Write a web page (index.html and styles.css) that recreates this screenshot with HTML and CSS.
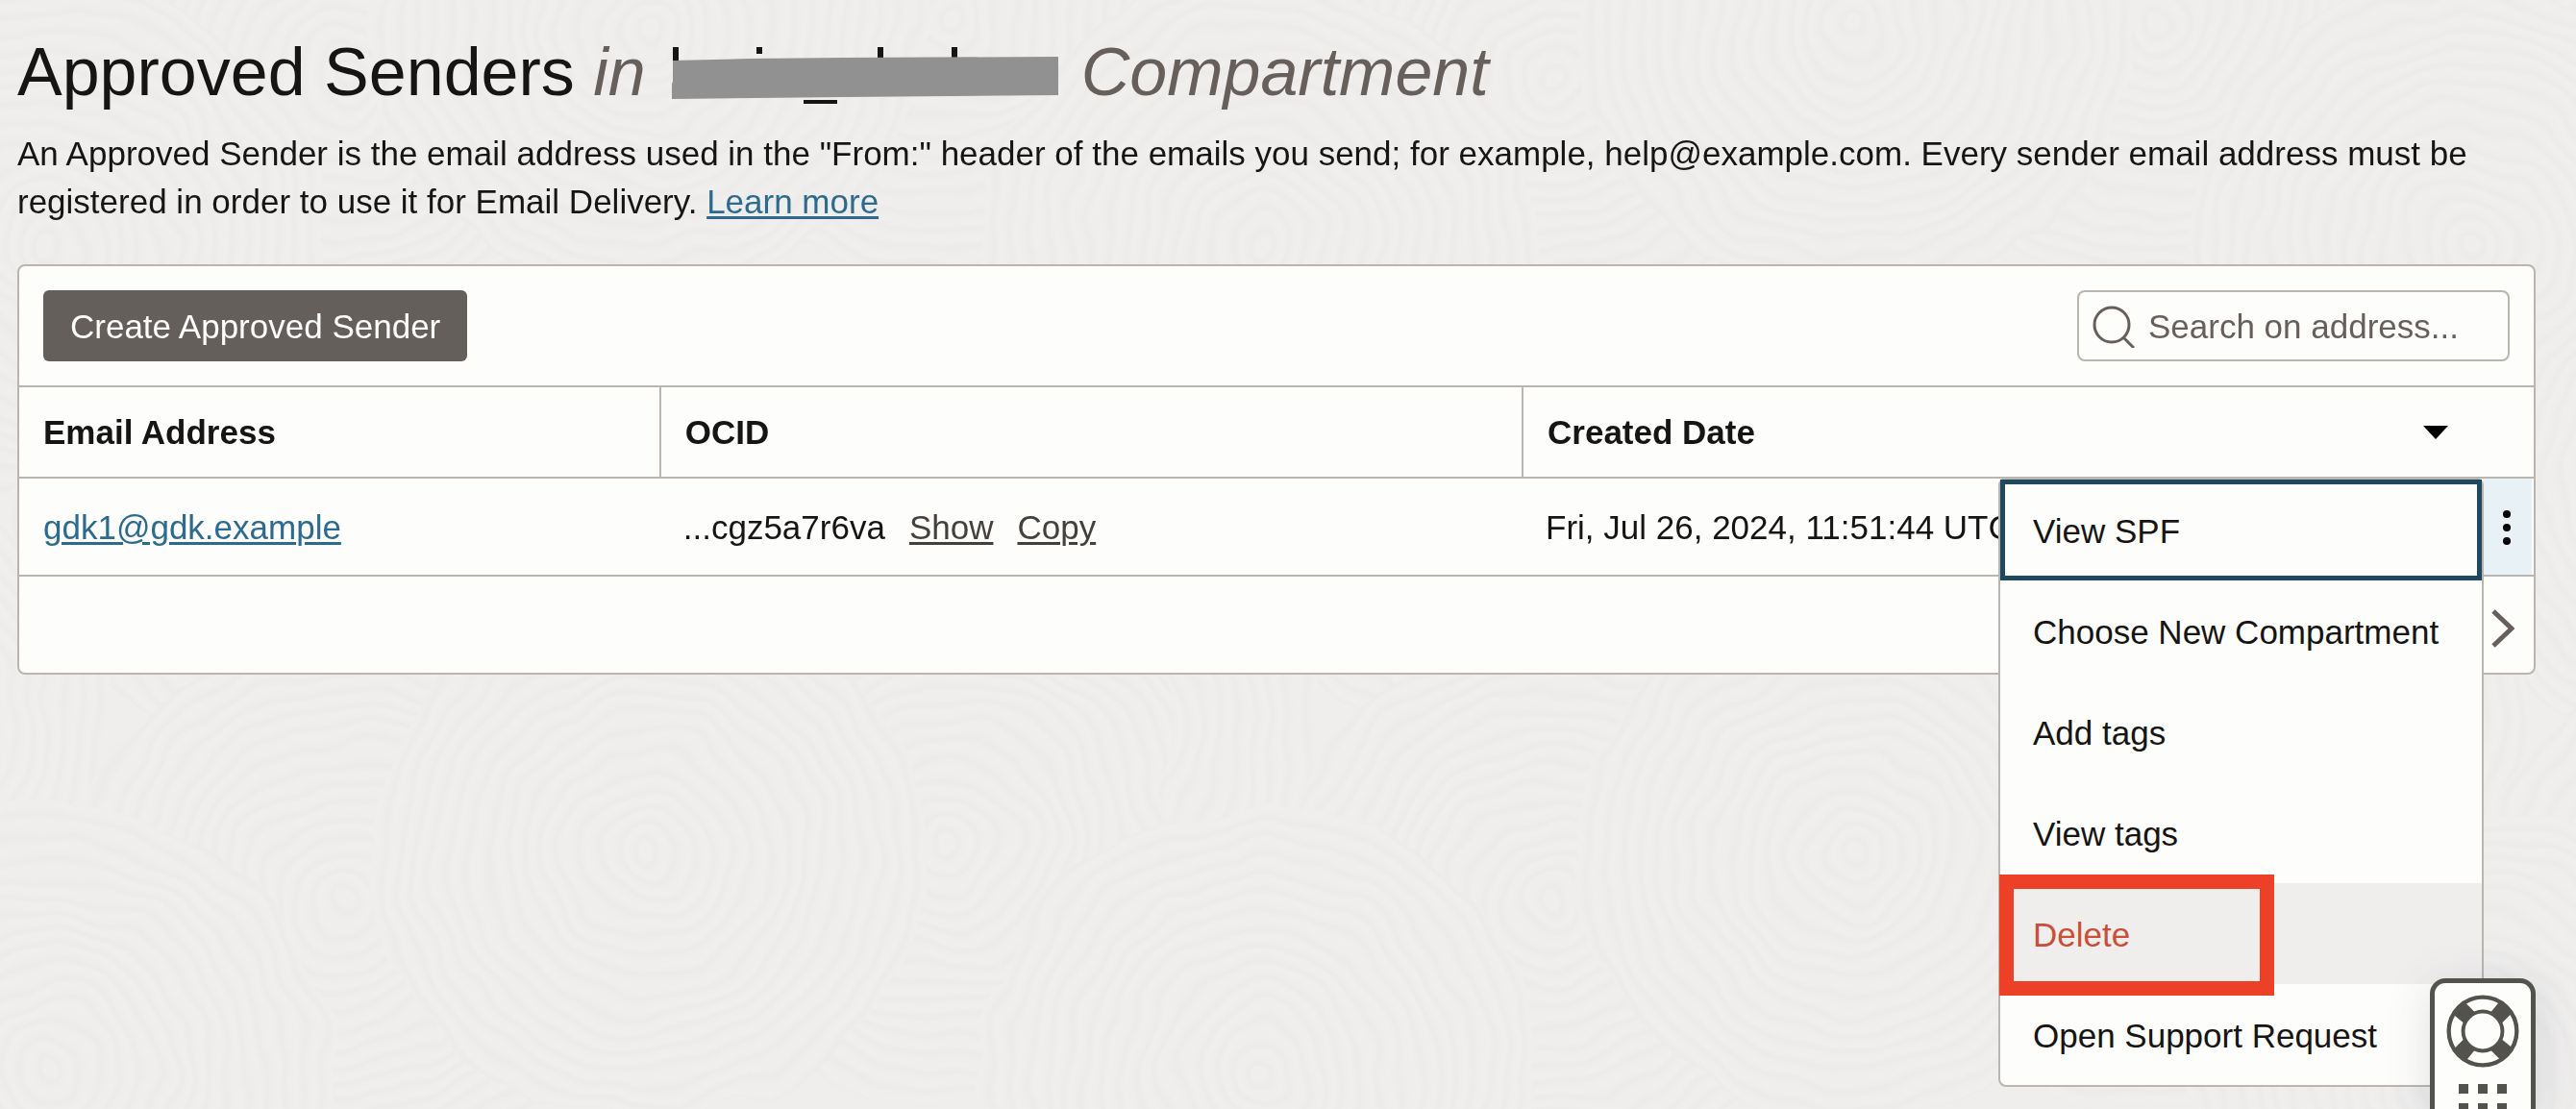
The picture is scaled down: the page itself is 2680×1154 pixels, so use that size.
FILE: index.html
```html
<!DOCTYPE html>
<html lang="en">
<head>
<meta charset="utf-8">
<title>Approved Senders</title>
<link rel="stylesheet" href="styles.css">
</head>
<body>
<svg class="texture" aria-hidden="true">
  <defs>
    <radialGradient id="ring" gradientUnits="userSpaceOnUse" cx="0" cy="0" r="19" spreadMethod="repeat">
      <stop offset="0" stop-color="#efeeed"/>
      <stop offset="0.35" stop-color="#f0efee"/>
      <stop offset="0.7" stop-color="#ecebea"/>
      <stop offset="1" stop-color="#efeeed"/>
    </radialGradient>
    <g id="swirl"><ellipse rx="290" ry="275" fill="url(#ring)"/></g>
    <filter id="wobble" x="0" y="0" width="100%" height="100%">
      <feTurbulence type="fractalNoise" baseFrequency="0.012" numOctaves="2" seed="4"/>
      <feDisplacementMap in="SourceGraphic" scale="36" xChannelSelector="R" yChannelSelector="G"/>
    </filter>
    <pattern id="swirls" width="1256" height="860" patternUnits="userSpaceOnUse" patternTransform="translate(0 380)">
      <rect width="1256" height="860" fill="#efeeed"/>
      <use href="#swirl" x="95" y="-86"/>
      <use href="#swirl" x="1351" y="-86"/>
      <use href="#swirl" x="340" y="160"/>
      <use href="#swirl" x="800" y="80"/>
      <use href="#swirl" x="-130" y="420"/>
      <use href="#swirl" x="1126" y="420"/>
      <use href="#swirl" x="400" y="600"/>
      <use href="#swirl" x="1028" y="538"/>
      <use href="#swirl" x="713" y="550"/>
      <use href="#swirl" x="95" y="774"/>
      <use href="#swirl" x="1351" y="774"/>
    </pattern>
  </defs>
  <rect width="100%" height="100%" fill="url(#swirls)" filter="url(#wobble)"/>
</svg>

<main class="page">
  <h1 class="title">Approved Senders <em>in</em>
    <svg class="redacted" viewBox="0 0 402 62" role="img" aria-label="redacted">
      <path fill="#161513" d="M1 0h6v20H1zM88 0h6v7h-6zM214 0h6v20h-6zM291 0h6v20h-6zM137 55h35v4h-35z"/>
      <path fill="#919191" d="M1 14L80 12L180 11L402 10V50L180 52L0 54V38L1 36z"/>
    </svg>
    <em>Compartment</em></h1>
  <p class="intro">An Approved Sender is the email address used in the "From:" header of the emails you send; for example, help@example.com. Every sender email address must be registered in order to use it for Email Delivery. <a class="link" href="#learn">Learn more</a></p>

  <section class="panel">
    <div class="toolbar">
      <button class="primary" type="button">Create Approved Sender</button>
      <label class="search">
        <svg class="search-icon" viewBox="0 0 44 44" aria-hidden="true"><circle cx="20" cy="20" r="18" /><path d="M32 33l11 11"/></svg>
        <input type="search" placeholder="Search on address..." aria-label="Search on address">
      </label>
    </div>

    <table class="senders">
      <colgroup><col class="col-email"><col class="col-ocid"><col><col class="col-actions"></colgroup>
      <thead>
        <tr>
          <th scope="col">Email Address</th>
          <th scope="col">OCID</th>
          <th scope="col" colspan="2">
            <span class="sortable">Created Date
              <button class="sort" type="button" aria-label="Sort descending"><svg viewBox="0 0 26 14"><path d="M0 0h26L13 14z"/></svg></button>
            </span>
          </th>
        </tr>
      </thead>
      <tbody>
        <tr>
          <td><a class="link" href="#sender">gdk1@gdk.example</a></td>
          <td><span class="ocid">...cgz5a7r6va <a href="#show">Show</a> <a href="#copy">Copy</a></span></td>
          <td>Fri, Jul 26, 2024, 11:51:44 UTC</td>
          <td class="actions">
            <button class="kebab" type="button" aria-label="Actions"><svg viewBox="0 0 8 36"><circle cx="4" cy="4" r="4"/><circle cx="4" cy="18" r="4"/><circle cx="4" cy="32" r="4"/></svg></button>
            <div class="menu">
              <button class="item focused" type="button">View SPF</button>
              <button class="item" type="button">Choose New Compartment</button>
              <button class="item" type="button">Add tags</button>
              <button class="item" type="button">View tags</button>
              <button class="item danger" type="button">Delete</button>
              <button class="item" type="button">Open Support Request</button>
            </div>
          </td>
        </tr>
      </tbody>
    </table>

    <div class="pager">
      <button class="next" type="button" aria-label="Next page"><svg viewBox="0 0 24 40"><path d="M2 2l19 18L2 38"/></svg></button>
    </div>
  </section>
</main>

<aside class="help">
  <button class="help-button" type="button" aria-label="Help">
    <svg class="lifebuoy" viewBox="-38 -38 76 76">
      <circle r="28" fill="none" stroke="#53524d" stroke-width="19"/>
      <g fill="#fdfdfb">
        <path id="gap" d="M-17 -28.500A33 33 0 0 1 16 -29L9 -20.500A23 23 0 0 0 -9 -20.500z"/>
        <use href="#gap" transform="rotate(90)"/>
        <use href="#gap" transform="rotate(180)"/>
        <use href="#gap" transform="rotate(270)"/>
      </g>
    </svg>
  </button>
  <svg class="grip" viewBox="0 0 50 30" aria-hidden="true"><path d="M0 0h10v10H0zM20 0h10v10H20zM40 0h10v10H40zM0 20h10v10H0zM20 20h10v10H20zM40 20h10v10H40z"/></svg>
</aside>
</body>
</html>
```
FILE: styles.css
```css
* { box-sizing: border-box; }

body {
  margin: 0;
  min-height: 100vh;
  overflow: hidden;
  background: #efeeed;
  color: #161513;
  font: 35px/50px "Liberation Sans", Arial, sans-serif;
}

button, input { font: inherit; color: inherit; }
button { border: 0; background: none; cursor: pointer; }

.texture {
  position: fixed;
  z-index: -1;
  inset: -40px;
  width: calc(100% + 80px);
  height: calc(100% + 80px);
}

.page { padding: 35px 42px 24px 18px; }

.title {
  margin: 0;
  font-size: 70px;
  font-weight: 400;
  line-height: 80px;
}
.title em { color: #665f5b; }
.redacted {
  width: 402px;
  height: 62px;
  margin: 0 4px 0 8px;
  vertical-align: -12px;
}

.intro { margin: 20px 0 40px; }
.link { color: #2c6a8e; }
.link, .ocid a {
  text-decoration-thickness: 3px;
  text-underline-offset: 3px;
}

.panel {
  border: 2px solid #bab5af;
  border-radius: 8px;
  background: #fdfdfb;
}

.toolbar {
  display: flex;
  justify-content: space-between;
  padding: 25px;
}
.primary {
  height: 74px;
  padding: 2px 28px 0;
  border-radius: 6px;
  background: #655f5b;
  color: #fff;
}
.search {
  display: flex;
  align-items: center;
  gap: 14px;
  width: 450px;
  height: 74px;
  padding: 2px 14px 0;
  border: 2px solid #bab5af;
  border-radius: 8px;
}
.search-icon {
  flex: none;
  width: 44px;
  height: 44px;
  fill: none;
  stroke: #665f5b;
  stroke-width: 3;
}
.search input {
  width: 100%;
  min-width: 0;
  padding: 0;
  border: 0;
  outline: 0;
  background: none;
}
.search input::placeholder { color: #665f5b; opacity: 1; }

.senders {
  width: 100%;
  table-layout: fixed;
  border-spacing: 0;
}
.col-email { width: 25.45%; }
.col-ocid { width: 34.3%; }
.col-actions { width: 53px; }

.senders th {
  height: 97px;
  padding: 0 25px;
  border: solid #bab5af;
  border-width: 2px 0;
  text-align: left;
}
.senders th + th { border-left-width: 2px; }
.sortable {
  display: flex;
  align-items: center;
  justify-content: space-between;
}
.sort { margin-right: 64px; padding: 0; }
.sort svg { display: block; width: 26px; height: 14px; }

.senders td {
  height: 102px;
  padding: 2px 25px 0;
  border-bottom: 2px solid #bab5af;
  white-space: nowrap;
}
.ocid { display: flex; gap: 25px; }
.ocid a { color: #45403c; }

.senders .actions {
  position: relative;
  padding: 0 2px 0 0;
}
.kebab {
  display: grid;
  place-items: center;
  width: 100%;
  height: 100px;
  padding: 2px 0 0;
  background: #e8f1f6;
}
.kebab svg { width: 8px; height: 36px; }

.menu {
  position: absolute;
  z-index: 1;
  top: -1px;
  right: 52px;
  display: flex;
  flex-direction: column;
  width: 505px;
  border: 2px solid #bab5af;
  border-radius: 8px;
  background: #fdfdfb;
}
.item {
  height: 105px;
  padding: 2px 34px 0;
  text-align: left;
}
.focused { box-shadow: inset 0 0 0 5px #1f4960; }
.danger {
  position: relative;
  background: #f0eeed;
  color: #cb4e37;
}
/* callout frame around the delete action */
.danger::after {
  content: "";
  position: absolute;
  box-sizing: border-box;
  top: -9px;
  left: -1px;
  width: 286px;
  height: 126px;
  border: 15px solid #ec4027;
}

.pager {
  display: flex;
  justify-content: flex-end;
  align-items: center;
  height: 100px;
  padding: 0 20px;
}
.next { padding: 8px 0 0; }
.next svg {
  display: block;
  width: 24px;
  height: 40px;
  fill: none;
  stroke: #665f5b;
  stroke-width: 5;
}

.help {
  position: fixed;
  z-index: 2;
  right: 42px;
  bottom: 0;
  display: flex;
  flex-direction: column;
  align-items: center;
  gap: 17px;
  width: 110px;
  height: 136px;
  padding-top: 12px;
  overflow: hidden;
  border: 5px solid #53524d;
  border-bottom: 0;
  border-radius: 16px 16px 0 0;
  background: #fdfdfb;
  box-shadow: 0 8px 48px rgba(60, 60, 90, 0.15);
}
.help-button { padding: 0; }
.lifebuoy { display: block; width: 76px; height: 76px; }
.grip { flex: none; width: 50px; height: 30px; fill: #53524d; }
```
